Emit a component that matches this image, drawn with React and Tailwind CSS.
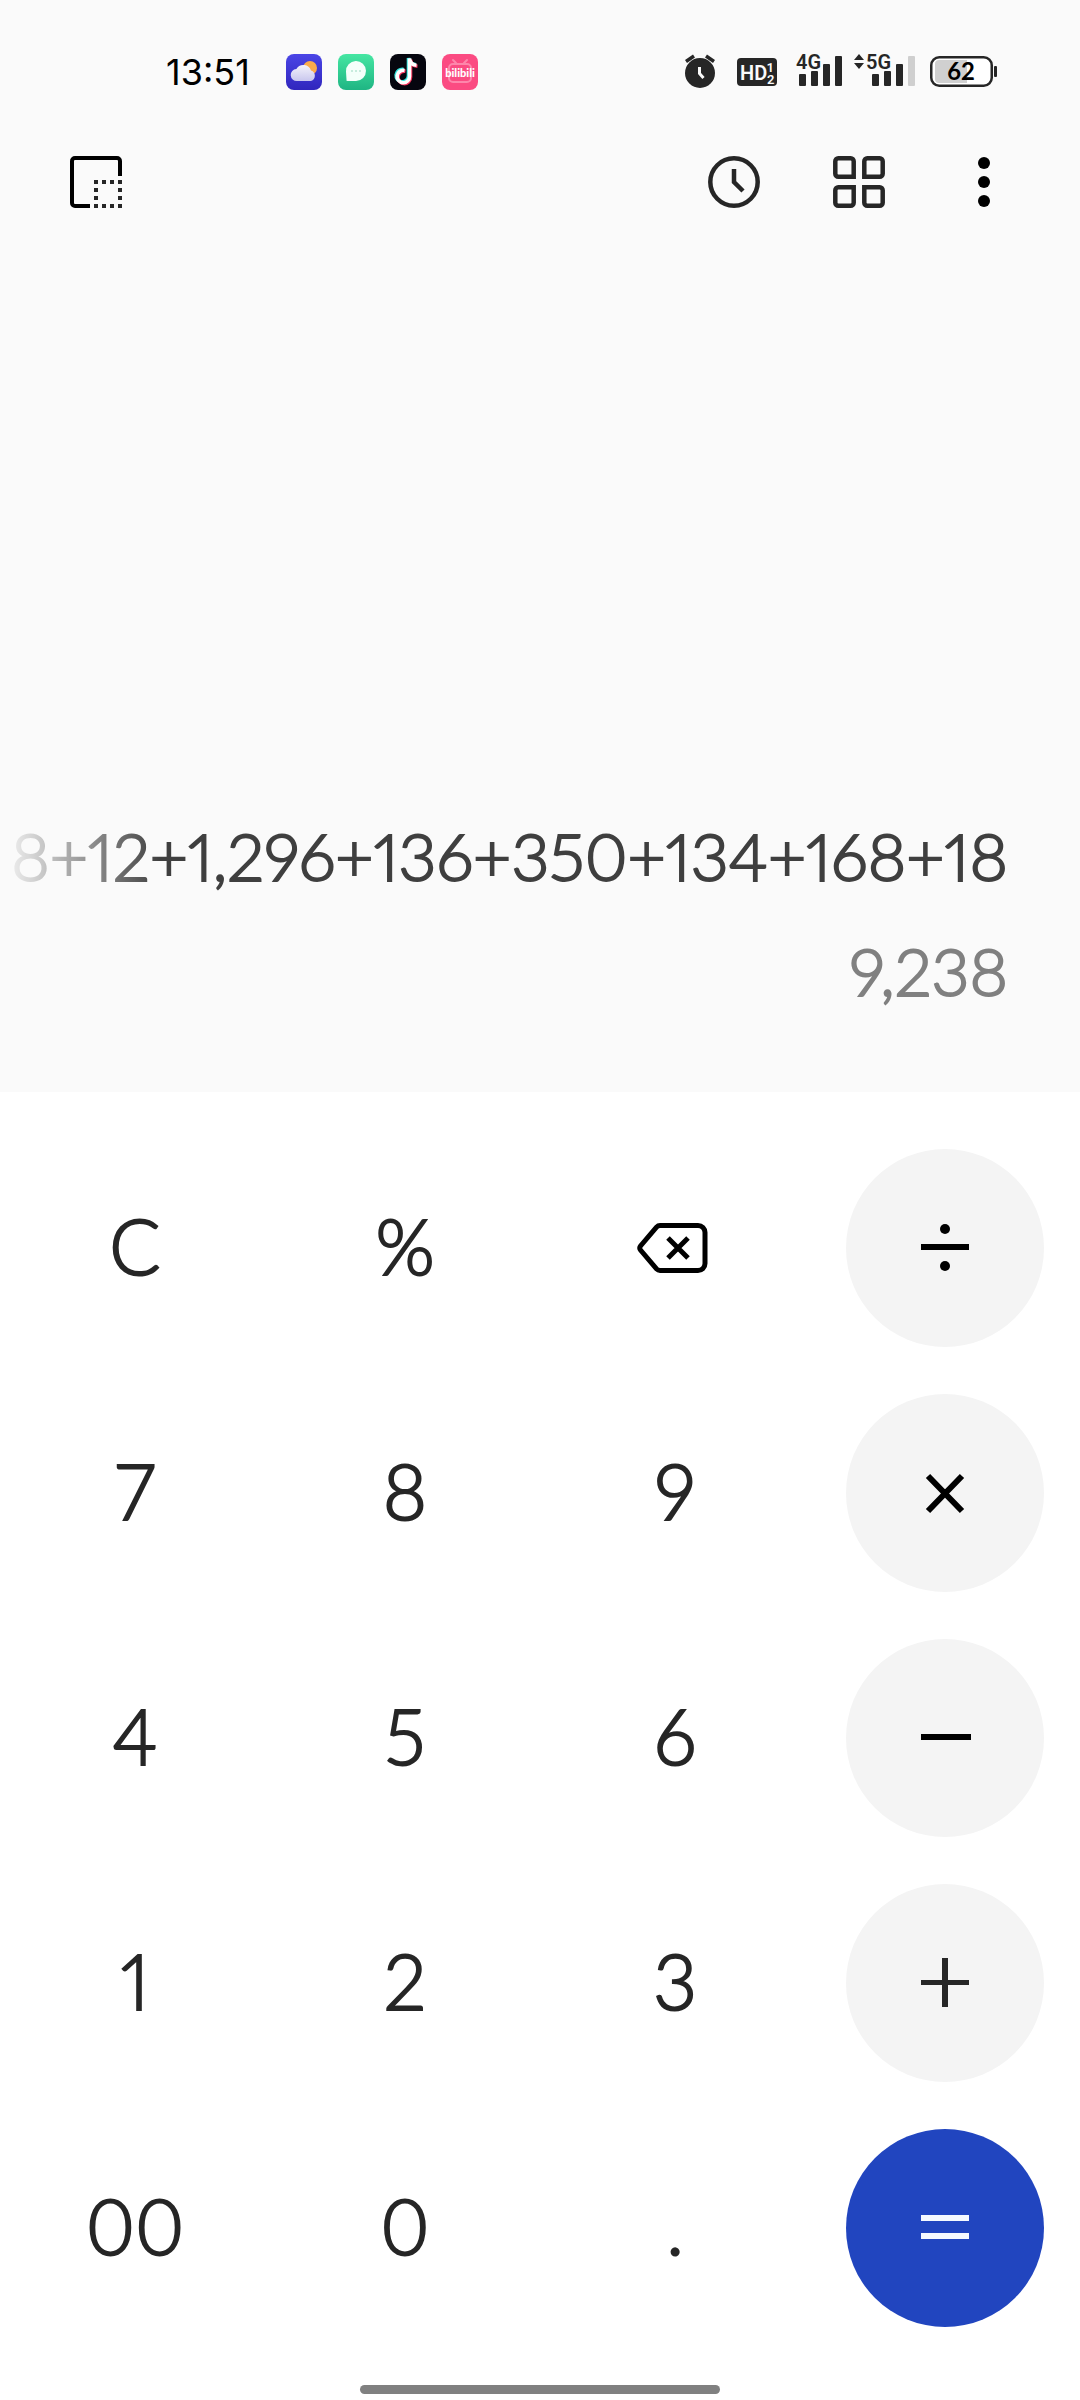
import React from 'react';

const WeatherIcon = () => (
  <svg viewBox="0 0 36 36" className="size-9">
    <defs>
      <linearGradient id="weather-bg" x1="0" y1="0" x2="0" y2="1">
        <stop offset="0" stopColor="#4a45e6" />
        <stop offset="1" stopColor="#3026bd" />
      </linearGradient>
      <linearGradient id="cloud" x1="0" y1="0" x2="0" y2="1">
        <stop offset="0" stopColor="#f4f3fb" />
        <stop offset="1" stopColor="#c9c7ee" />
      </linearGradient>
    </defs>
    <rect width="36" height="36" rx="8" fill="url(#weather-bg)" />
    <circle cx="24" cy="14" r="7" fill="#fbab4b" />
    <path d="M11 27a6 6 0 0 1-.6-12A8 8 0 0 1 25 16.500a5.500 5.500 0 0 1 0 10.500z" fill="url(#cloud)" />
  </svg>
);

const MessagesIcon = () => (
  <svg viewBox="0 0 36 36" className="size-9">
    <defs>
      <linearGradient id="messages-bg" x1="0" y1="0" x2="0" y2="1">
        <stop offset="0" stopColor="#45e6a2" />
        <stop offset="1" stopColor="#1fb583" />
      </linearGradient>
    </defs>
    <rect width="36" height="36" rx="8" fill="url(#messages-bg)" />
    <path d="M8 17.500a10 10 0 1 1 10 9.500H9.500q-1.500 0-1-1.500z" fill="#f4fffa" />
    <g fill="#b9e6d3">
      <circle cx="14" cy="17" r="1" />
      <circle cx="18" cy="17" r="1" />
      <circle cx="22" cy="17" r="1" />
    </g>
  </svg>
);

const TikTokIcon = () => (
  <svg viewBox="0 0 36 36" className="size-9">
    <rect width="36" height="36" rx="8" fill="#06060f" />
    <g fill="none" strokeWidth="3.600">
      <path d="M13.500 15.500a6.200 6.200 0 1 0 5 6V4c.4 3.600 3 6.200 7 6.600" stroke="#35e6e0" />
      <path d="M15.500 17.300a6.200 6.200 0 1 0 5 6V5.600c.4 3.600 3 6.200 7 6.600" stroke="#f5315a" />
      <path d="M14.500 16.400a6.200 6.200 0 1 0 5 6V4.500c.4 3.800 3 6.400 7 6.800" stroke="#fff" />
    </g>
  </svg>
);

const BilibiliIcon = () => (
  <svg viewBox="0 0 36 36" className="size-9">
    <rect width="36" height="36" rx="8" fill="#fb4b82" />
    <g fill="none" stroke="#fd86ab" strokeWidth="2" strokeLinecap="round">
      <rect x="7" y="10" width="22" height="18" rx="4" />
      <path d="m11 6 3 3M25 6l-3 3" />
    </g>
    <text x="18" y="23" textAnchor="middle" className="fill-white font-['Lato'] text-[11px] font-black">bilibili</text>
  </svg>
);

const AlarmIcon = () => (
  <svg viewBox="0 0 40 36" className="h-9 w-10" fill="none" stroke="#262626">
    <circle cx="15" cy="19" r="15" fill="#262626" stroke="none" />
    <path d="M1 7.500 9 2M29 7.500 21 2" strokeWidth="3.500" />
    <path d="M14.500 13v6.500l4 4.500" stroke="#fafafa" strokeWidth="3" />
  </svg>
);

const HdIcon = () => (
  <svg viewBox="0 0 47 36" className="h-9 w-[47px]">
    <rect y="4" width="40" height="28" rx="4" fill="#262626" />
    <g className="fill-[#fafafa] font-['Roboto'] font-semibold">
      <text x="3" y="26" className="text-[20px]">HD</text>
      <text x="30" y="18" className="text-[13px]">1</text>
      <text x="30" y="30" className="text-[13px]">2</text>
    </g>
  </svg>
);

const Signal4G = () => (
  <svg viewBox="0 -6 46 48" className="h-12 w-[46px]" fill="#262626">
    <rect x="3" y="20" width="7" height="12" rx="1" />
    <rect x="15" y="17" width="7" height="15" rx="1" />
    <rect x="27" y="10" width="7" height="22" rx="1" />
    <rect x="39" y="2" width="7" height="30" rx="1" />
    <text x="0" y="15" className="stroke-[#fafafa] stroke-2 font-['Roboto'] text-[20px] font-semibold [paint-order:stroke]">4G</text>
  </svg>
);

const Signal5G = () => (
  <svg viewBox="0 -6 64 48" className="h-12 w-16" fill="#262626">
    <path d="m5 0 5 6H0zM5 15 0 9h10z" />
    <rect x="18" y="20" width="7" height="12" rx="1" />
    <rect x="30" y="17" width="7" height="15" rx="1" />
    <rect x="42" y="10" width="7" height="22" rx="1" />
    <rect x="54" y="2" width="7" height="30" rx="1" fill="#cfcfcf" />
    <text x="12" y="15" className="stroke-[#fafafa] stroke-2 font-['Roboto'] text-[20px] font-semibold [paint-order:stroke]">5G</text>
  </svg>
);

const Battery = () => (
  <svg viewBox="0 0 67 36" className="h-9 w-[67px]">
    <rect x="1.250" y="3.250" width="60.500" height="28.500" rx="8" fill="#fff" stroke="#262626" strokeWidth="2.500" />
    <path d="M9 6h28v23H9a4 4 0 0 1-4-4V10a4 4 0 0 1 4-4z" fill="#d0d0d0" />
    <rect x="64" y="12" width="3" height="11" rx="1" fill="#262626" />
    <text x="31" y="26" textAnchor="middle" className="fill-black font-['Lato'] text-[24px] font-bold">62</text>
  </svg>
);

const ResizeIcon = () => (
  <svg viewBox="0 0 52 52" className="size-13" fill="none">
    <path d="M20 50H5a3 3 0 0 1-3-3V5a3 3 0 0 1 3-3h42a3 3 0 0 1 3 3v15" stroke="#000" strokeWidth="4" />
    <path d="M24 26h28M24 50h28" stroke="#262626" strokeWidth="4" strokeDasharray="4 4" />
    <path d="M26 32v16M50 32v16" stroke="#262626" strokeWidth="4" strokeDasharray="4 4" />
  </svg>
);

const HistoryIcon = () => (
  <svg viewBox="0 0 52 52" className="size-13" fill="none" stroke="#262626" strokeWidth="4.500">
    <circle cx="26" cy="26" r="23.700" />
    <path d="M26 13v13l9 9" />
  </svg>
);

const GridIcon = () => (
  <svg viewBox="0 0 52 52" className="size-13" fill="none" stroke="#262626" strokeWidth="4.500">
    <path d="M5.300 2.300h12.400a3 3 0 0 1 3 3v15.400H5.300a3 3 0 0 1-3-3V5.300a3 3 0 0 1 3-3z" />
    <path d="M34.300 2.300h12.400a3 3 0 0 1 3 3v12.400a3 3 0 0 1-3 3H31.300V5.300a3 3 0 0 1 3-3z" />
    <path d="M5.300 31.300h15.400v15.400a3 3 0 0 1-3 3H5.300a3 3 0 0 1-3-3V34.300a3 3 0 0 1 3-3z" />
    <path d="M31.300 31.300h15.400a3 3 0 0 1 3 3v12.400a3 3 0 0 1-3 3H34.300a3 3 0 0 1-3-3z" />
  </svg>
);

const MoreIcon = () => (
  <svg viewBox="0 0 52 52" className="size-13">
    <circle cx="26" cy="7" r="6" />
    <circle cx="26" cy="26" r="6" />
    <circle cx="26" cy="45" r="6" />
  </svg>
);

const BackspaceIcon = () => (
  <svg viewBox="0 0 76 52" className="h-13 w-19" fill="none" stroke="#000" strokeWidth="5">
    <path d="M23 3.500h38a7 7 0 0 1 7 7v31a7 7 0 0 1-7 7H23q-2 0-3.500-1.600L3.500 28q-1.500-2 0-4L19.500 5.100Q21 3.500 23 3.500z" />
    <path d="m31 16 20 20M51 16 31 36" />
  </svg>
);

const DivideIcon = () => (
  <svg viewBox="0 0 52 52" className="size-13">
    <rect x="2" y="22" width="48" height="6" />
    <circle cx="26" cy="7" r="5" />
    <circle cx="26" cy="44" r="5" />
  </svg>
);

const MultiplyIcon = () => (
  <svg viewBox="0 0 52 52" className="size-13" stroke="#000" strokeWidth="6">
    <path d="m9 9 34 35M43 9 9 44" />
  </svg>
);

const MinusIcon = () => (
  <svg viewBox="0 0 52 52" className="size-13">
    <rect x="2" y="22" width="50" height="6" />
  </svg>
);

const PlusIcon = () => (
  <svg viewBox="0 0 52 52" className="size-13" fill="#262626">
    <rect x="2" y="23" width="48" height="5" />
    <rect x="23" y="1" width="6" height="49" />
  </svg>
);

const EqualsIcon = () => (
  <svg viewBox="0 0 52 52" className="size-13" fill="#f5f9ff">
    <rect x="2" y="13" width="48" height="6" />
    <rect x="2" y="31" width="48" height="6" />
  </svg>
);

const keys = [
  { id: 'clear', label: 'C' },
  { id: 'percent', label: '%' },
  { id: 'backspace', name: 'Backspace', icon: BackspaceIcon },
  { id: 'divide', name: 'Divide', icon: DivideIcon, type: 'operator' },
  { id: '7', label: '7' },
  { id: '8', label: '8' },
  { id: '9', label: '9' },
  { id: 'multiply', name: 'Multiply', icon: MultiplyIcon, type: 'operator' },
  { id: '4', label: '4' },
  { id: '5', label: '5' },
  { id: '6', label: '6' },
  { id: 'minus', name: 'Minus', icon: MinusIcon, type: 'operator' },
  { id: '1', label: '1' },
  { id: '2', label: '2' },
  { id: '3', label: '3' },
  { id: 'plus', name: 'Plus', icon: PlusIcon, type: 'operator' },
  { id: '00', label: '00' },
  { id: '0', label: '0' },
  { id: 'point', label: '.' },
  { id: 'equals', name: 'Equals', icon: EqualsIcon, type: 'equals' }
];

const keyStyles = {
  operator: 'bg-[#f4f4f4]',
  equals: 'bg-[#2145bf]'
};

const StatusBar = () => (
  <div className="flex items-center justify-between pt-12 pl-[166px] pr-[83px]">
    <div className="flex items-center gap-4">
      <span className="w-26 font-['Inter'] text-4xl/9 text-black">13:51</span>
      <WeatherIcon />
      <MessagesIcon />
      <TikTokIcon />
      <BilibiliIcon />
    </div>
    <div className="flex items-center gap-3">
      <AlarmIcon />
      <HdIcon />
      <Signal4G />
      <Signal5G />
      <Battery />
    </div>
  </div>
);

const Toolbar = () => (
  <header className="flex items-center justify-between px-[70px] pt-15">
    <button type="button" aria-label="Floating window"><ResizeIcon /></button>
    <div className="flex items-center gap-[73px]">
      <button type="button" aria-label="History"><HistoryIcon /></button>
      <button type="button" aria-label="Converters"><GridIcon /></button>
      <button type="button" aria-label="More options"><MoreIcon /></button>
    </div>
  </header>
);

const App = () => {
  return (
    <div className="flex min-h-screen flex-col bg-white font-['Lato',sans-serif] proportional-nums">
      <section className="flex flex-1 flex-col bg-[#fafafa]">
        <StatusBar />
        <Toolbar />
        <div className="mt-auto pb-16 text-[66px]/[115px] font-light whitespace-nowrap">
          {/* long expressions run off to the left and fade out */}
          <div className="flex justify-end overflow-hidden pr-[72px] text-[#3f3f3f] [-webkit-text-stroke:2px] [mask-image:linear-gradient(to_right,transparent,black_160px)]">
            8+12+1,296+136+350+134+168+18
          </div>
          <output className="flex justify-end pr-[72px] text-[#808080] [-webkit-text-stroke:2px]">9,238</output>
        </div>
      </section>

      <main className="grid grid-cols-4 justify-items-center gap-y-[47px] pt-[57px]">
        {keys.map((key) => (
          <button
            key={key.id}
            type="button"
            aria-label={key.name}
            className={`flex size-[198px] items-center justify-center rounded-full text-[76px]/[96px] font-light text-[#262626] [-webkit-text-stroke:2px] ${keyStyles[key.type] || ''}`}
          >
            {key.icon ? <key.icon /> : <span className="pb-1">{key.label}</span>}
          </button>
        ))}
      </main>

      <div className="flex justify-center pt-[58px] pb-[6px]">
        <div className="h-[9px] w-1/3 rounded-full bg-[#808080]" />
      </div>
    </div>
  );
};

export default App;
